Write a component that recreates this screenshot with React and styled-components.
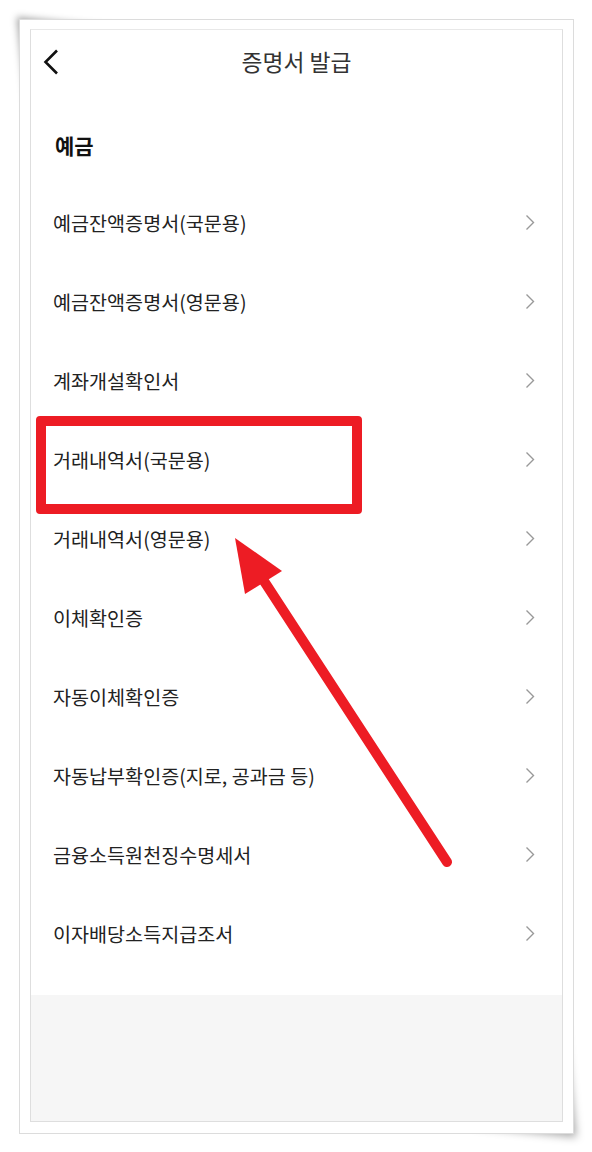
import React from 'react'
import styled, { createGlobalStyle } from 'styled-components'

const GlobalStyle = createGlobalStyle`
  * {
    box-sizing: border-box;
  }
  body {
    margin: 0;
    background: #fff;
    font-family: 'Noto Sans CJK KR', 'Noto Sans', sans-serif;
  }
`

const items = [
  '예금잔액증명서(국문용)',
  '예금잔액증명서(영문용)',
  '계좌개설확인서',
  '거래내역서(국문용)',
  '거래내역서(영문용)',
  '이체확인증',
  '자동이체확인증',
  '자동납부확인증(지로, 공과금 등)',
  '금융소득원천징수명세서',
  '이자배당소득지급조서',
]

const BackIcon = () => (
  <svg width='16' height='26' viewBox='0 0 16 26'>
    <path d='M14 1.5 L2.5 13 L14 24.5' fill='none' stroke='#111' strokeWidth='2.6' />
  </svg>
)

const ChevronIcon = () => (
  <svg width='10' height='17' viewBox='0 0 10 17'>
    <path d='M1.5 1.5 L8.5 8.5 L1.5 15.5' fill='none' stroke='#999' strokeWidth='1.4' />
  </svg>
)

const App = () => {
  return (
    <Page>
      <GlobalStyle />
      <Frame>
        <Screen>
          <Header>
            <BackButton type='button'>
              <BackIcon />
            </BackButton>
            <Title>증명서 발급</Title>
          </Header>
          <SectionTitle>예금</SectionTitle>
          <List>
            {items.map((item) => (
              <Row key={item}>
                <span>{item}</span>
                <ChevronIcon />
              </Row>
            ))}
          </List>
          <Spacer />
          <Footer />
        </Screen>
      </Frame>

      {/* annotation overlay */}
      <Highlight />
      <Arrow width='592' height='1152' viewBox='0 0 592 1152'>
        <line x1='447' y1='862' x2='262' y2='578' stroke='#ed1c24' strokeWidth='10' strokeLinecap='round' />
        <polygon points='235,538 282,571 245,594' fill='#ed1c24' />
      </Arrow>
    </Page>
  )
}

const Page = styled.div`
  position: relative;
  isolation: isolate;
  width: 592px;
  height: 1152px;
  padding: 19px 0 0 19px;
  background: #fff;
`

// curled-paper shadows at the top-left and bottom-right corners
const Frame = styled.div`
  position: relative;
  width: 555px;
  height: 1115px;
  padding: 9px 10px 11px 10px;
  background: #fff;
  border: 1px solid #dcdcdc;

  &::before {
    content: '';
    position: absolute;
    left: 0;
    top: 0;
    width: 110px;
    height: 110px;
    background: #fff;
    box-shadow: -3px -3px 7px rgba(0, 0, 0, 0.35);
    transform-origin: top left;
    transform: skew(6deg, 6deg);
    z-index: -1;
  }

  &::after {
    content: '';
    position: absolute;
    right: 0;
    bottom: 0;
    width: 100px;
    height: 120px;
    background: #fff;
    box-shadow: 3px 4px 8px rgba(0, 0, 0, 0.35);
    transform-origin: bottom right;
    transform: skew(6deg, 6deg);
    z-index: -1;
  }
`

const Screen = styled.div`
  display: flex;
  flex-direction: column;
  height: 100%;
  border: 1px solid #dedede;
  border-top-color: #e8e8e8;
  background: #fff;
`

const Header = styled.div`
  position: relative;
  display: flex;
  align-items: center;
  justify-content: center;
  height: 64px;
  flex-shrink: 0;
`

const BackButton = styled.button`
  position: absolute;
  left: 12px;
  top: 19px;
  display: flex;
  padding: 0;
  border: 0;
  background: none;
`

const Title = styled.h1`
  margin: 0;
  font-size: 22.8px;
  font-weight: 400;
  color: #333;
  line-height: 28px;
`

const SectionTitle = styled.h2`
  margin: 0;
  padding: 37px 24px 24px;
  font-size: 21px;
  font-weight: 700;
  line-height: 28px;
  color: #111;
  flex-shrink: 0;
`

const List = styled.ul`
  margin: 0;
  padding: 0;
  list-style: none;
  flex-shrink: 0;
`

const Row = styled.li`
  display: flex;
  align-items: center;
  justify-content: space-between;
  height: 79px;
  padding: 0 27px 0 22px;
  font-size: 19.6px;
  color: #222;
  line-height: 26px;
`

const Spacer = styled.div`
  height: 22px;
  flex-shrink: 0;
`

const Footer = styled.div`
  flex: 1;
  background: #f6f6f6;
`

const Highlight = styled.div`
  position: absolute;
  left: 36px;
  top: 416px;
  width: 326px;
  height: 98px;
  border: 10px solid #ed1c24;
  border-radius: 4px;
  pointer-events: none;
`

const Arrow = styled.svg`
  position: absolute;
  left: 0;
  top: 0;
  pointer-events: none;
`

export default App
